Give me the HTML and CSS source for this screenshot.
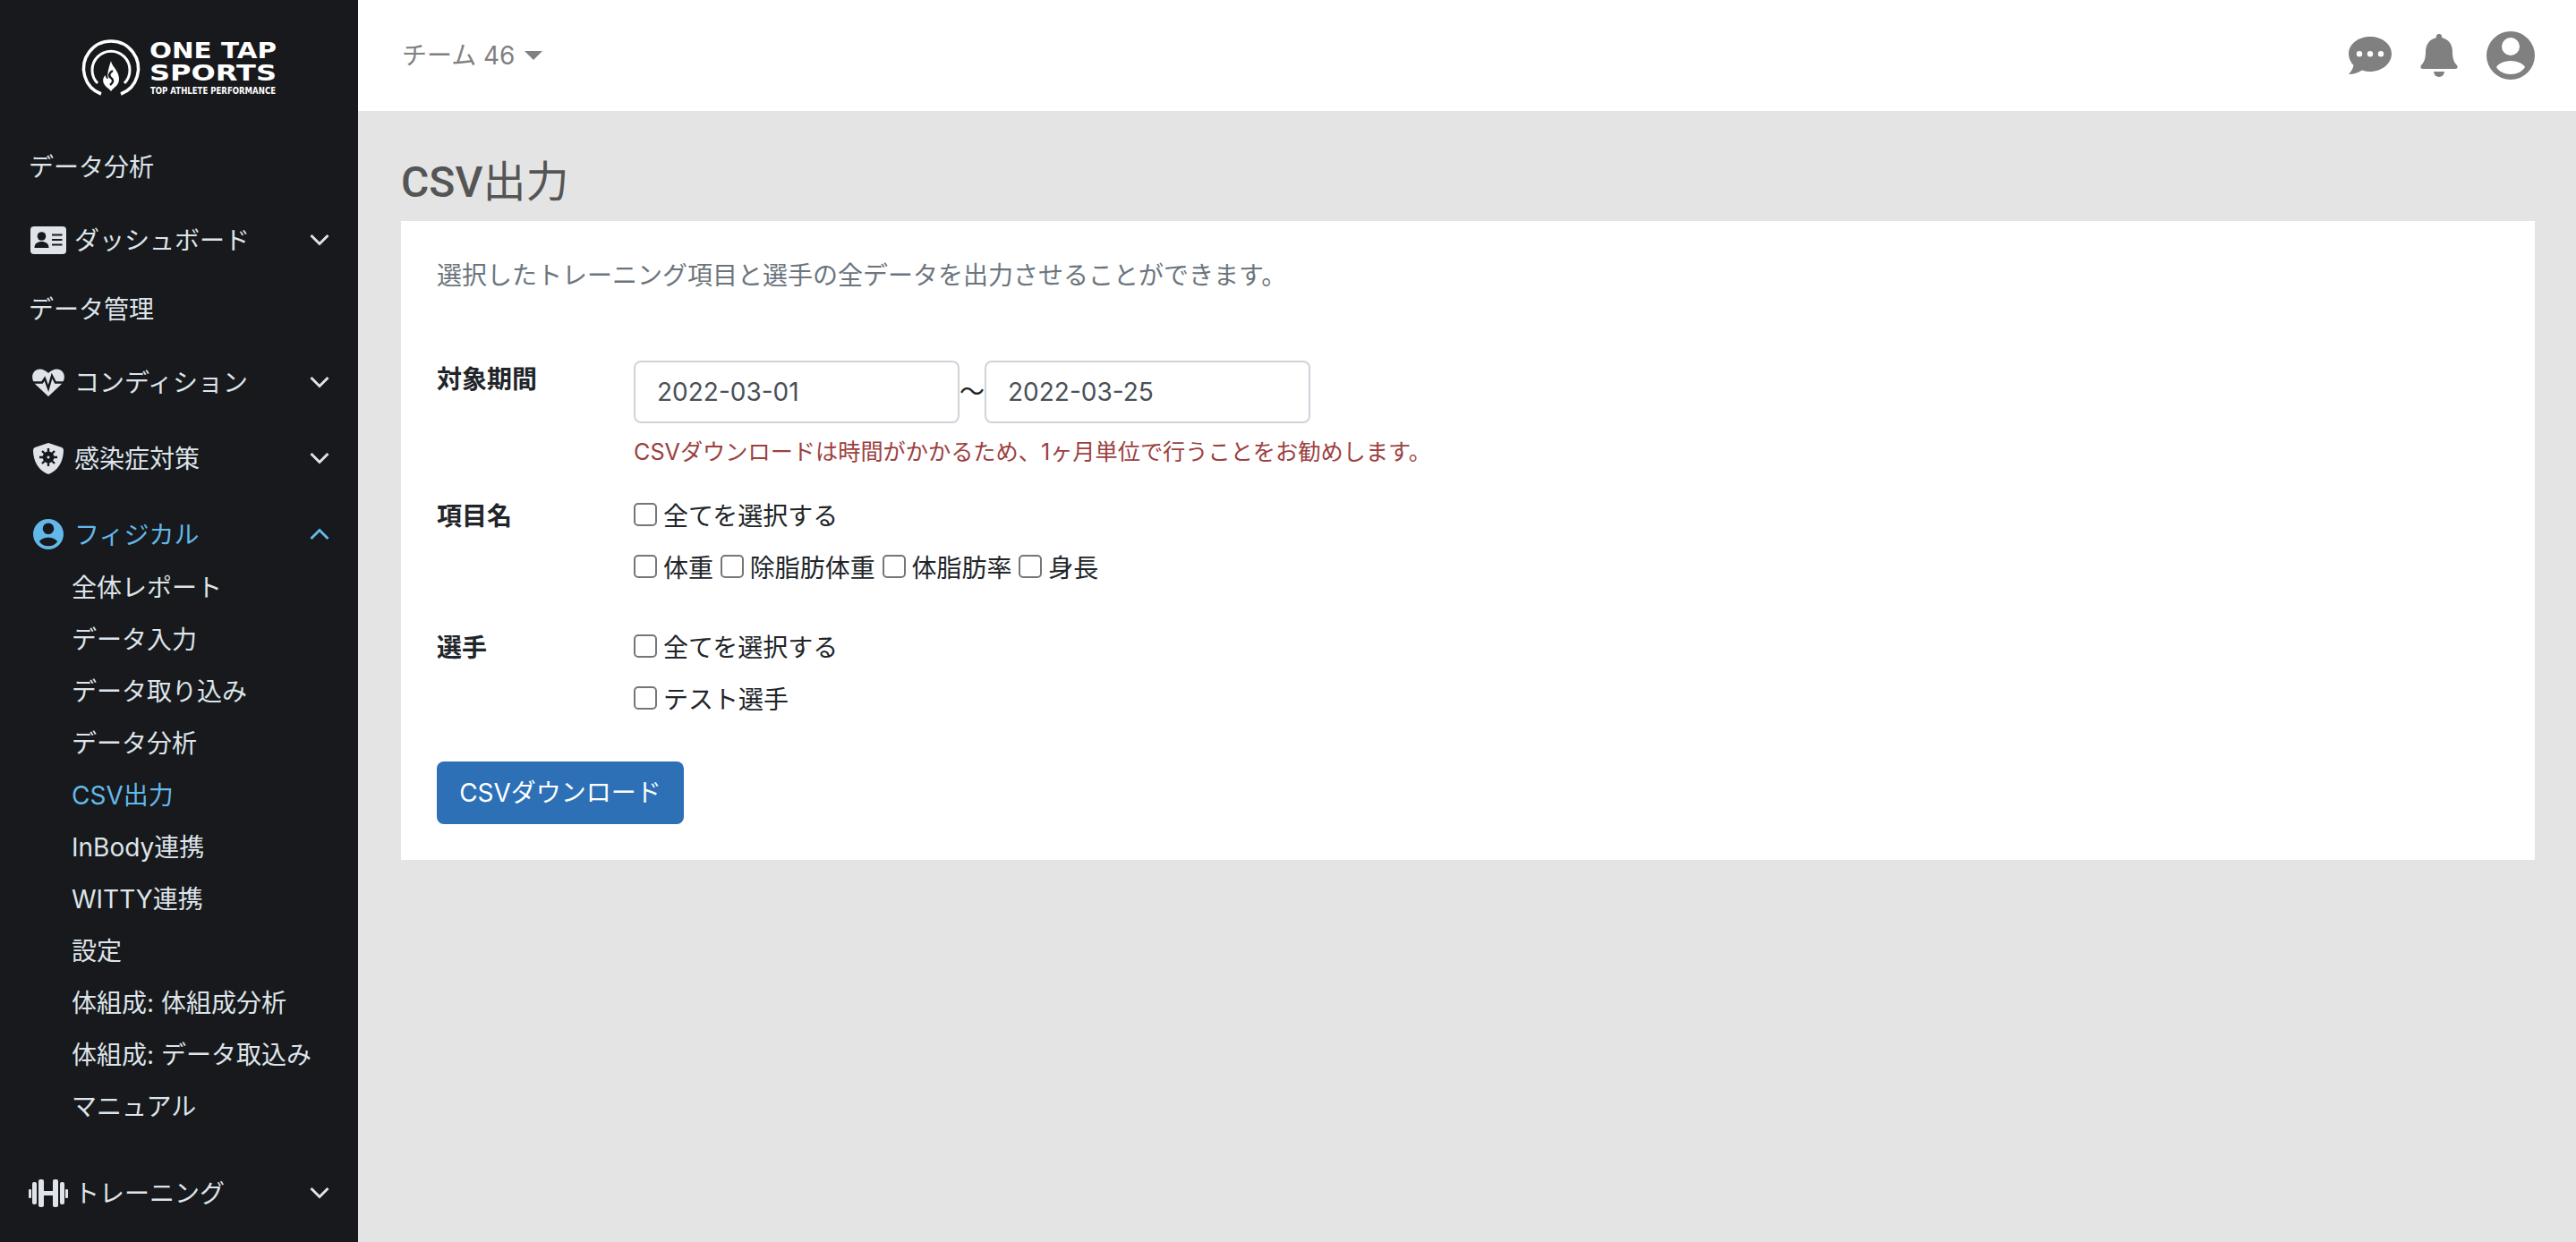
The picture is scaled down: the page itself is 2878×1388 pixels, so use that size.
FILE: index.html
```html
<!DOCTYPE html>
<html lang="ja">
<head>
<meta charset="utf-8">
<title>CSV出力</title>
<link rel="stylesheet" href="styles.css">
</head>
<body>
<div class="app">
  <aside class="sidebar">
    <div class="logo">
      <svg class="logo-svg" width="400" height="124" viewBox="0 0 400 124">
        <path class="logo-ring" d="M113 105 A30.5 30.5 0 1 1 135 105"/>
        <path class="logo-ring-inner" d="M109 93 A21 21 0 1 1 139 93"/>
        <path class="logo-flame" d="M124 68 C125 73 128 75 130 79 C134 85 134 92 130 96 C128 98 126 99 124 102 C122 99 119 98 117 95 C114 91 115 86 118 84 C118 87 119 88 121 88 C119 83 122 74 124 68Z"/>
        <path class="logo-flame-cut" d="M126 79 C122 81 121 85 124 87 C127 89 127 92 123 95"/>
        <text class="logo-big" x="167" y="65" textLength="142" lengthAdjust="spacingAndGlyphs">ONE TAP</text>
        <text class="logo-big" x="167" y="90" textLength="142" lengthAdjust="spacingAndGlyphs">SPORTS</text>
        <text class="logo-small" x="168" y="105" textLength="140" lengthAdjust="spacingAndGlyphs">TOP ATHLETE PERFORMANCE</text>
      </svg>
    </div>
    <nav class="nav">
      <div class="nav-plain">データ分析</div>
      <div class="nav-row">
        <span class="nav-icon">
          <svg width="40" height="31" viewBox="0 0 40 31"><path class="icon-fill" d="M4 0H36A4 4 0 0 1 40 4V27A4 4 0 0 1 36 31H4A4 4 0 0 1 0 27V4A4 4 0 0 1 4 0Z"/><circle class="icon-cut" cx="12.5" cy="11" r="4.8"/><path class="icon-cut" d="M4.5 24C4.5 19 8 17 12.5 17S20.500 19 20.500 24Z"/><path class="icon-line" d="M24 9.500H35.500M24 15H35.500M24 20.500H35.500"/></svg>
        </span>
        <span class="nav-text">ダッシュボード</span>
        <svg class="chev" width="22" height="14" viewBox="0 0 22 14"><path d="M1.500 2L11 11.500L20.500 2"/></svg>
      </div>
      <div class="nav-plain">データ管理</div>
      <div class="nav-row">
        <span class="nav-icon">
          <svg width="36" height="31" viewBox="0 0 36 31"><path class="icon-fill" d="M18 31L4 18C-1 13-1 6 3 2.500C7-1 13 0 18 5C23 0 29-1 33 2.500C37 6 37 13 32 18Z"/><path class="icon-pulse" d="M0 15.500H11L14 11L18 22L22 8L26 15.500H36"/></svg>
        </span>
        <span class="nav-text">コンディション</span>
        <svg class="chev" width="22" height="14" viewBox="0 0 22 14"><path d="M1.500 2L11 11.500L20.500 2"/></svg>
      </div>
      <div class="nav-row">
        <span class="nav-icon">
          <svg width="34" height="35" viewBox="0 0 34 35"><path class="icon-fill" d="M17 0L32 5Q34 6 34 8C34 20 28 31 17 35C6 31 0 20 0 8Q0 6 2 5Z"/><circle class="icon-cut" cx="17" cy="16" r="6.500"/><path class="icon-spikes" d="M17 6V26M7 16H27M10 9L24 23M24 9L10 23"/><circle class="icon-fill" cx="17" cy="16" r="1.500"/></svg>
        </span>
        <span class="nav-text">感染症対策</span>
        <svg class="chev" width="22" height="14" viewBox="0 0 22 14"><path d="M1.500 2L11 11.500L20.500 2"/></svg>
      </div>
      <div class="nav-row nav-row-active">
        <span class="nav-icon">
          <svg width="34" height="34" viewBox="0 0 54 54"><path class="icon-current" fill-rule="evenodd" d="M27 0A27 27 0 1 1 27 54A27 27 0 1 1 27 0ZM27 7A10 10 0 1 0 27 27A10 10 0 1 0 27 7ZM11 40C14 45 20 48 27 48S40 45 43 40C41 36 34 33 27 33S13 36 11 40Z"/></svg>
        </span>
        <span class="nav-text">フィジカル</span>
        <svg class="chev" width="22" height="14" viewBox="0 0 22 14"><path d="M1.500 12L11 2.500L20.500 12"/></svg>
      </div>
      <ul class="sub">
        <li>全体レポート</li>
        <li>データ入力</li>
        <li>データ取り込み</li>
        <li>データ分析</li>
        <li class="sub-active">CSV出力</li>
        <li>InBody連携</li>
        <li>WITTY連携</li>
        <li>設定</li>
        <li>体組成: 体組成分析</li>
        <li>体組成: データ取込み</li>
        <li>マニュアル</li>
      </ul>
      <div class="nav-row">
        <span class="nav-icon">
          <svg width="44" height="31" viewBox="0 0 44 31"><g class="icon-fill"><rect x="0" y="11" width="3" height="10" rx="1"/><rect x="4" y="3" width="5" height="25" rx="2"/><rect x="11" y="0" width="6" height="31" rx="2"/><rect x="17" y="13" width="10" height="5"/><rect x="27" y="0" width="6" height="31" rx="2"/><rect x="35" y="3" width="5" height="25" rx="2"/><rect x="41" y="11" width="3" height="10" rx="1"/></g></svg>
        </span>
        <span class="nav-text">トレーニング</span>
        <svg class="chev" width="22" height="14" viewBox="0 0 22 14"><path d="M1.500 2L11 11.500L20.500 2"/></svg>
      </div>
    </nav>
  </aside>
  <div class="main">
    <header class="topbar">
      <div class="team"><span>チーム 46</span><span class="caret"></span></div>
      <div class="top-icons">
        <svg class="top-icon" width="48" height="42" viewBox="0 0 48 42"><path fill-rule="evenodd" d="M24 0C37 0 48 8 48 19S37 39 24 39C21 39 18 38.500 15 37.500C11 40 6 42 0 42C3 39 5 35 5.500 32C2 28.500 0 24 0 19C0 8 11 0 24 0ZM12 16A3.200 3.200 0 1 0 12 22.400A3.200 3.200 0 1 0 12 16ZM24 16A3.200 3.200 0 1 0 24 22.400A3.200 3.200 0 1 0 24 16ZM36 16A3.200 3.200 0 1 0 36 22.400A3.200 3.200 0 1 0 36 16Z"/></svg>
        <svg class="top-icon" width="42" height="48" viewBox="0 0 42 48"><path d="M21 0A3 3 0 0 1 24 4C32 6 36 12 36 20C36 28 38 32 41 35Q43 39 39 39H3Q-1 39 1 35C4 32 6 28 6 20C6 12 10 6 18 4A3 3 0 0 1 21 0Z"/><path d="M15 42H27A6 6 0 0 1 15 42Z"/></svg>
        <svg class="top-icon" width="54" height="54" viewBox="0 0 54 54"><path fill-rule="evenodd" d="M27 0A27 27 0 1 1 27 54A27 27 0 1 1 27 0ZM27 7A10 10 0 1 0 27 27A10 10 0 1 0 27 7ZM11 40C14 45 20 48 27 48S40 45 43 40C41 36 34 33 27 33S13 36 11 40Z"/></svg>
      </div>
    </header>
    <main class="content">
      <h1 class="title"><span class="title-latin">CSV</span>出力</h1>
      <section class="card">
        <p class="desc">選択したトレーニング項目と選手の全データを出力させることができます。</p>
        <div class="form-row form-row-period">
          <div class="form-label">対象期間</div>
          <div class="form-field">
            <div class="dates">
              <input class="date" type="text" value="2022-03-01">
              <span class="tilde">〜</span>
              <input class="date" type="text" value="2022-03-25">
            </div>
            <p class="hint">CSVダウンロードは時間がかかるため、1ヶ月単位で行うことをお勧めします。</p>
          </div>
        </div>
        <div class="form-row form-row-items">
          <div class="form-label">項目名</div>
          <div class="form-field">
            <div class="check-line"><label><input class="check" type="checkbox"> 全てを選択する</label></div>
            <div class="check-line">
              <label><input class="check" type="checkbox"> 体重</label>
              <label><input class="check" type="checkbox"> 除脂肪体重</label>
              <label><input class="check" type="checkbox"> 体脂肪率</label>
              <label><input class="check" type="checkbox"> 身長</label>
            </div>
          </div>
        </div>
        <div class="form-row form-row-players">
          <div class="form-label">選手</div>
          <div class="form-field">
            <div class="check-line"><label><input class="check" type="checkbox"> 全てを選択する</label></div>
            <div class="check-line"><label><input class="check" type="checkbox"> テスト選手</label></div>
          </div>
        </div>
        <button class="btn" type="button">CSVダウンロード</button>
      </section>
    </main>
  </div>
</div>
</body>
</html>
```
FILE: styles.css
```css
* { box-sizing: border-box; }
html, body { margin: 0; padding: 0; }
body {
  font-family: Inter, "Noto Sans CJK JP", sans-serif;
  font-size: 28px;
  line-height: 42px;
  color: #212529;
  background: #e4e4e4;
}
.app { display: flex; height: 100vh; overflow: hidden; }

.sidebar { width: 400px; flex: none; background: #17191c; color: #dee4ea; overflow: hidden; }
.logo { height: 124px; }
.logo-svg { display: block; }
.logo-ring, .logo-ring-inner { fill: none; stroke: #fff; stroke-width: 3.5; }
.logo-ring-inner { stroke-width: 3; }
.logo-flame { fill: #fff; }
.logo-flame-cut { fill: none; stroke: #17191c; stroke-width: 2.5; }
.logo-big { fill: #fff; font-family: "DejaVu Sans", sans-serif; font-weight: 700; font-size: 25px; }
.logo-small { fill: #fff; font-family: "DejaVu Sans", sans-serif; font-weight: 700; font-size: 10px; }

.nav { padding-top: 27px; }
.nav-plain { height: 70px; margin-bottom: 5px; padding: 2px 0 0 32px; display: flex; align-items: center; }
.nav-row { height: 84px; padding: 0 32px; display: flex; align-items: center; gap: 7px; }
.nav-row + .nav-row { margin-top: 1px; }
.nav-plain + .nav-row { margin-top: 0; }
.nav-row-active { color: #63b8ea; }
.nav-icon { width: 44px; flex: none; display: flex; justify-content: center; }
.nav-icon svg { display: block; }
.nav-text { flex: 1; padding-top: 1px; }
.chev { flex: none; fill: none; stroke: currentColor; stroke-width: 3; }
.icon-fill { fill: #dee4ea; }
.icon-cut { fill: #17191c; }
.icon-line { fill: none; stroke: #17191c; stroke-width: 2; }
.icon-pulse { fill: none; stroke: #17191c; stroke-width: 2.4; }
.icon-spikes { fill: none; stroke: #17191c; stroke-width: 2.4; }
.icon-current { fill: currentColor; }

.sub { list-style: none; margin: -11px 0 25px; padding: 0 0 0 80px; }
.sub li { height: 58px; line-height: 59px; }
.sub .sub-active { color: #63b8ea; }

.main { flex: 1; min-width: 0; display: flex; flex-direction: column; }
.topbar {
  height: 124px;
  flex: none;
  background: #fff;
  padding: 0 46px 0 49px;
  display: flex;
  align-items: center;
  justify-content: space-between;
}
.team { display: flex; align-items: center; gap: 10px; color: #808080; }
.caret { width: 0; height: 0; border-top: 10px solid #808080; border-left: 10px solid transparent; border-right: 10px solid transparent; }
.top-icons { display: flex; align-items: center; gap: 32px; }
.top-icon { display: block; fill: #808080; }

.content { padding: 50px 46px 0 48px; }
.title { height: 58px; margin: 0 0 15px; font-size: 48px; line-height: 58px; font-weight: 400; color: #555; }
.title-latin { font-family: Roboto, sans-serif; font-weight: 500; }
.card { background: #fff; padding: 40px; }
.desc { margin: 0 0 74px; color: #6c757d; }
.form-row { display: grid; grid-template-columns: 220px 1fr; }
.form-label { font-weight: 700; }
.form-row-period { margin-bottom: 32px; }
.form-row-items { margin-bottom: 47px; }
.form-row-players { margin-bottom: 48px; }
.dates { display: flex; align-items: center; }
.date {
  width: 364px;
  height: 70px;
  padding: 0 24px;
  border: 2px solid #ced4da;
  border-radius: 8px;
  font: inherit;
  color: #495057;
  background: #fff;
}
.tilde { width: 28px; flex: none; }
.hint { margin: 14px 0 1px; font-size: 25.2px; line-height: 36px; color: #9c4040; }
.check-line { height: 42px; }
.check-line + .check-line { margin-top: 16px; }
.check {
  appearance: none;
  width: 26px;
  height: 26px;
  margin: 0 -1px 0 0;
  border: 2px solid #767676;
  border-radius: 5px;
  background: #fff;
  vertical-align: -1px;
}
.btn {
  display: block;
  width: 276px;
  height: 70px;
  padding: 0;
  border: 0;
  border-radius: 8px;
  background: #2d70b6;
  color: #fff;
  font: inherit;
}
```
